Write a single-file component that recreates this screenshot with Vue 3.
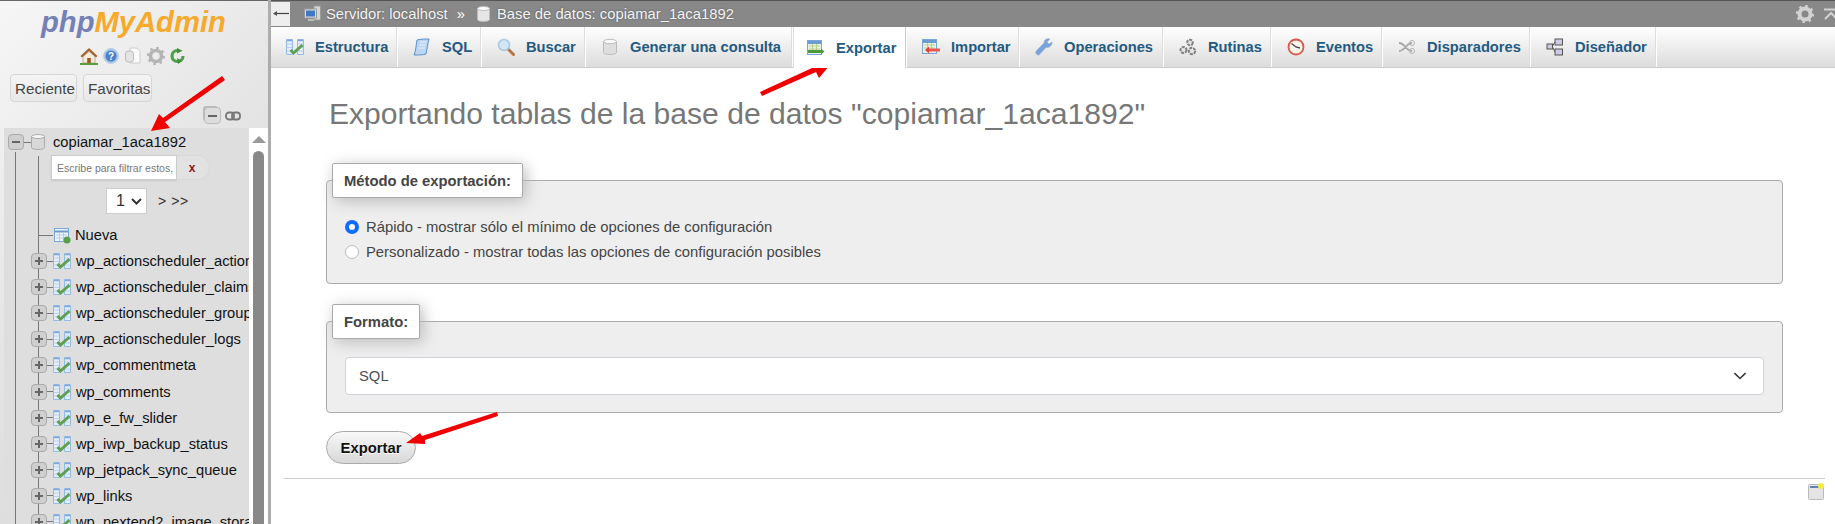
<script setup>
const tabs = [
  { label: 'Estructura', w: 127, icon: 'table' },
  { label: 'SQL', w: 84, icon: 'sql' },
  { label: 'Buscar', w: 104, icon: 'search' },
  { label: 'Generar una consulta', w: 207, icon: 'db' },
  { label: 'Exportar', w: 114, icon: 'export', active: true },
  { label: 'Importar', w: 113, icon: 'import' },
  { label: 'Operaciones', w: 144, icon: 'wrench' },
  { label: 'Rutinas', w: 108, icon: 'gears' },
  { label: 'Eventos', w: 111, icon: 'clock' },
  { label: 'Disparadores', w: 148, icon: 'trigger' },
  { label: 'Diseñador', w: 126, icon: 'designer' }
]
const tables = [
  'wp_actionscheduler_actions', 'wp_actionscheduler_claims', 'wp_actionscheduler_groups',
  'wp_actionscheduler_logs', 'wp_commentmeta', 'wp_comments', 'wp_e_fw_slider',
  'wp_iwp_backup_status', 'wp_jetpack_sync_queue', 'wp_links', 'wp_nextend2_image_storage'
]
</script>

<template>
  <div class="page">
    <aside class="side">
      <div class="logo"><span class="php">php</span><span class="my">MyAdmin</span></div>
      <div class="quick">
        <svg width="18" height="18" viewBox="0 0 18 18"><path d="M3 9.500 9 4.500l6 5V16H3z" fill="#f3ead8" stroke="#9a8a70" stroke-width=".6"/><path d="M9 1 .5 9 2 10.500 9 4l7 6.500L17.500 9z" fill="#a5622c"/><rect x="7.200" y="11" width="3.600" height="5" fill="#9a5a28"/><path d="M0 17h18" stroke="#5b9c3c" stroke-width="2"/></svg>
        <svg width="16" height="16" viewBox="0 0 16 16"><circle cx="8" cy="8" r="7.500" fill="#a9c6ea" stroke="#b9cfe8"/><circle cx="8" cy="8" r="5.500" fill="#4a80c8"/><text x="8" y="11.500" text-anchor="middle" font-size="10" font-weight="700" font-family="Liberation Sans" fill="#fff">?</text></svg>
        <svg width="18" height="18" viewBox="0 0 18 18"><path d="M6 1h7l3 3v12H6z" fill="#fafafa" stroke="#ccc"/><rect x="1.500" y="4" width="8" height="11" rx="3" fill="#e4e4e4" stroke="#bbb"/></svg>
        <svg width="18" height="18" viewBox="0 0 18 18"><circle cx="9" cy="9" r="5.500" fill="none" stroke="#b4b4b4" stroke-width="3.600"/><circle cx="9" cy="9" r="8" fill="none" stroke="#b4b4b4" stroke-width="2.400" stroke-dasharray="2.500 3.780"/></svg>
        <svg width="15" height="16" viewBox="0 0 15 16"><path d="M7.500 2.500a5.500 5.500 0 1 0 5.500 5.500" fill="none" stroke="#4fa04a" stroke-width="3.200"/><path d="M7 0v5.500l5.500-2.700zM7 10l5 3-4 3z" fill="#3f8f3c"/></svg>
      </div>
      <div class="nav-btns">
        <span class="nbtn">Reciente</span>
        <span class="nbtn">Favoritas</span>
      </div>
      <div class="tools">
        <span class="collapse"><i></i></span>
        <svg width="16" height="10" viewBox="0 0 16 10"><rect x="1" y="1.500" width="8" height="7" rx="3" fill="none" stroke="#777" stroke-width="1.800"/><rect x="7" y="1.500" width="8" height="7" rx="3" fill="none" stroke="#777" stroke-width="1.800"/></svg>
      </div>
      <div class="panel">
        <div class="tree">
          <span class="line l1"></span>
          <span class="line l2"></span>
          <div class="row db">
            <span class="exp minus"></span>
            <span class="stub"></span>
            <svg class="dbicon" width="14" height="16" viewBox="0 0 14 16"><path d="M.5 2.500v11c0 2.600 13 2.600 13 0v-11z" fill="#d8d8d8" stroke="#aaa"/><ellipse cx="7" cy="2.500" rx="6.500" ry="2" fill="#f6f6f6" stroke="#aaa"/></svg>
            <span class="dbname">copiamar_1aca1892</span>
          </div>
          <div class="filter">
            <span class="finput">Escribe para filtrar estos,</span>
            <span class="fclear">x</span>
          </div>
          <div class="pager">
            <span class="pagesel">1<svg width="11" height="7" viewBox="0 0 11 7"><path d="M1 1l4.500 4.500L10 1" fill="none" stroke="#333" stroke-width="2"/></svg></span>
            <span class="pagelinks">&gt; &gt;&gt;</span>
          </div>
          <div class="row nueva">
            <span class="hstub"></span>
            <svg width="17" height="17" viewBox="0 0 17 17"><rect x=".5" y="1.500" width="14" height="13" fill="#eef4fb" stroke="#7aa5d8"/><path d="M1 4.500h13" stroke="#6c9bd2" stroke-width="2"/><path d="M2 8h11M2 11h11M5.500 6v8M9.500 6v8" stroke="#b7cde8"/><circle cx="13" cy="13" r="3.500" fill="#56a04a"/></svg>
            <span class="tname">Nueva</span>
          </div>
          <div v-for="t in tables" :key="t" class="row tbl">
            <span class="exp plus"></span>
            <span class="tstub"></span>
            <svg width="18" height="16" viewBox="0 0 18 16"><path d="M.5 .5h6v15h-6zM11.500 .5h6v15h-6z" fill="#e4eefa" stroke="#94bae6"/><path d="M1 1.500h5M12 1.500h5" stroke="#7fa9dc" stroke-width="1.500"/><path d="M1 5h5M1 8.500h5M1 12h5M12 5h5M12 8.500h5M12 12h5" stroke="#b8d1ee"/><path d="M4.500 11l3 3 9-8" fill="none" stroke="#5f9f52" stroke-width="3"/></svg>
            <span class="tname">{{ t }}</span>
          </div>
        </div>
        <div class="scroll">
          <span class="up"></span>
          <span class="thumb"></span>
        </div>
      </div>
    </aside>

    <span class="side-edge"></span>

    <main class="main">
      <header class="crumb">
        <span class="back"><svg width="16" height="7" viewBox="0 0 16 7"><path d="M1 3.500h15" stroke="#444" stroke-width="1.200"/><path d="M0 3.500 4 1v5z" fill="#555"/></svg></span>
        <svg class="srv" width="17" height="18" viewBox="0 0 17 18"><rect x="10" y="1" width="6.500" height="14" fill="#d5d5d5" stroke="#999"/><rect x=".5" y="4" width="12" height="9" fill="#dcdcdc" stroke="#999"/><rect x="2" y="5.500" width="9" height="6" fill="#3f78c4"/><path d="M4 15h6" stroke="#bbb" stroke-width="2"/></svg>
        <span class="ctext">Servidor: localhost</span>
        <span class="csep">»</span>
        <svg class="cdb" width="13" height="16" viewBox="0 0 13 16"><path d="M.5 2.500v11c0 2.600 12 2.600 12 0v-11z" fill="#e6e6e6" stroke="#bbb"/><ellipse cx="6.500" cy="2.500" rx="6" ry="2" fill="#fafafa" stroke="#bbb"/></svg>
        <span class="ctext">Base de datos: copiamar_1aca1892</span>
        <span class="spacer"></span>
        <svg class="cgear" width="18" height="18" viewBox="0 0 18 18"><circle cx="9" cy="9" r="5.500" fill="none" stroke="#d2d2d2" stroke-width="4"/><circle cx="9" cy="9" r="8" fill="none" stroke="#d2d2d2" stroke-width="2.400" stroke-dasharray="2.500 3.780"/></svg>
        <svg class="ccol" width="14" height="12" viewBox="0 0 14 12"><path d="M0 1.500h14M1 11l6-6 6 6" fill="none" stroke="#d2d2d2" stroke-width="2"/></svg>
      </header>

      <nav class="tabs">
        <a v-for="t in tabs" :key="t.label" class="tab" :class="{ active: t.active }" :style="{ width: t.w + 'px' }">
          <svg class="ticon" width="18" height="18" viewBox="0 0 18 18">
            <template v-if="t.icon === 'table'"><path d="M.5 1.500h6v15h-6zM11.500 1.500h6v15h-6z" fill="#e4eefa" stroke="#94bae6"/><path d="M1 2.500h5M12 2.500h5" stroke="#7fa9dc" stroke-width="1.500"/><path d="M1 6h5M1 9.500h5M1 13h5M12 6h5M12 9.500h5M12 13h5" stroke="#b8d1ee"/><path d="M4.500 12l3 3 9-8" fill="none" stroke="#5f9f52" stroke-width="3"/></template>
            <template v-else-if="t.icon === 'sql'"><path d="M4 2c3-1 9-1 12-1-1 4-2 10-3 15-3 1-8 1-12 1 2-4 2-10 3-15z" fill="#bcd6f2" stroke="#5d8fca"/><path d="M7 4h6M6.500 7h6M6 10h6" stroke="#e8f1fb"/></template>
            <template v-else-if="t.icon === 'search'"><path d="M11 11l5.500 5.500" stroke="#b5773c" stroke-width="3" stroke-linecap="round"/><circle cx="7" cy="7" r="5.500" fill="#d3e6f7" stroke="#a8c6e0" stroke-width="1.500"/></template>
            <template v-else-if="t.icon === 'db'"><path d="M2.500 3.500v11c0 2.600 13 2.600 13 0v-11z" fill="#dedede" stroke="#bbb"/><ellipse cx="9" cy="3.500" rx="6.500" ry="2.200" fill="#fafafa" stroke="#bbb"/></template>
            <template v-else-if="t.icon === 'export'"><rect x=".5" y="1.500" width="14" height="14" fill="#eaf2e4" stroke="#7aa5d8"/><path d="M1 3.500h13" stroke="#6c9bd2" stroke-width="3"/><path d="M2 7h11M2 10h11M5.500 5v6M9.500 5v6" stroke="#b8d08e"/><path d="M1 12.500h13" stroke="#4a9a3c" stroke-width="3"/><path d="M14 9.500l3.500 3-3.500 3z" fill="#4a9a3c"/></template>
            <template v-else-if="t.icon === 'import'"><rect x=".5" y="1.500" width="14" height="14" fill="#eaf2e4" stroke="#7aa5d8"/><path d="M1 3.500h13" stroke="#6c9bd2" stroke-width="3"/><path d="M2 7h11M2 10h11M5.500 5v6M9.500 5v6" stroke="#b8d08e"/><path d="M6 12h12" stroke="#ee5555" stroke-width="3"/><path d="M7 8.500l-4 3.500 4 3.500z" fill="#e63c3c"/></template>
            <template v-else-if="t.icon === 'wrench'"><path d="M2 16.500c-2-1-1.500-3 0-4.500L9 5c0-3 2-5 6-4l-3 3 2 2 3-2c.5 3-2 6-6 5.500L4.500 16.500c-1 1-1.500.8-2.500 0z" fill="#7aa2dc" stroke="#9fb0c8" stroke-width=".6"/></template>
            <template v-else-if="t.icon === 'gears'"><g fill="#e4e4e4" stroke="#808080" stroke-width="2"><circle cx="11" cy="4.500" r="2.800" stroke-dasharray="3 1"/><circle cx="4.500" cy="12" r="3" stroke-dasharray="3 1"/><circle cx="13" cy="13" r="3.200" stroke-dasharray="3 1"/></g></template>
            <template v-else-if="t.icon === 'clock'"><circle cx="9" cy="9" r="7.500" fill="#fbf5ea" stroke="#d9564a" stroke-width="1.800"/><path d="M4.500 5.500 9 9l4 1" fill="none" stroke="#444" stroke-width="1.300"/></template>
            <template v-else-if="t.icon === 'trigger'"><path d="M1 5c6 0 7 8 13 8M1 13c6 0 7-8 13-8" fill="none" stroke="#a8a8a8" stroke-width="1.800"/><circle cx="14" cy="5" r="2.500" fill="none" stroke="#b5b5b5"/><circle cx="14" cy="13" r="2.500" fill="none" stroke="#b5b5b5"/></template>
            <template v-else-if="t.icon === 'designer'"><rect x="9" y="1" width="7.500" height="6" fill="#cfc9e6" stroke="#555"/><rect x="9" y="11" width="7.500" height="6" fill="#cfc9e6" stroke="#555"/><rect x="1" y="6" width="5.500" height="5" fill="#cfc9e6" stroke="#555"/><path d="M6.500 8 9 4M6.500 9 9 14" stroke="#555"/></template>
          </svg>
          <span>{{ t.label }}</span>
        </a>
        <span class="tab-fill"></span>
      </nav>

      <section class="content">
        <h2>Exportando tablas de la base de datos "copiamar_1aca1892"</h2>
        <div class="fs first">
          <div class="legend">Método de exportación:</div>
          <label class="opt"><span class="radio on"></span>Rápido - mostrar sólo el mínimo de opciones de configuración</label>
          <label class="opt"><span class="radio"></span>Personalizado - mostrar todas las opciones de configuración posibles</label>
        </div>
        <div class="fs second">
          <div class="legend">Formato:</div>
          <div class="select">SQL<svg width="14" height="8" viewBox="0 0 14 8"><path d="M1.500 1.200 7 6.500l5.500-5.300" fill="none" stroke="#343a40" stroke-width="1.600"/></svg></div>
        </div>
        <button class="go">Exportar</button>
      </section>
      <div class="rule"></div>
      <div class="foot">
        <svg width="16" height="17" viewBox="0 0 16 17"><rect x=".5" y="1.500" width="15" height="15" rx="1" fill="#e4e4e4" stroke="#bbb"/><path d="M2 4h10" stroke="#3a63a8" stroke-width="1.500"/><circle cx="13" cy="3" r="3" fill="#f4ec3a"/></svg>
      </div>
    </main>

    <svg class="arrows" width="1835" height="524" viewBox="0 0 1835 524">
      <g fill="#f00000" stroke="none">
        <path d="M222 76 L225 80 L165 122 L170 128 L151 131 L159 114 L163 118 Z"/>
        <path d="M760 92 L762 96 L816 72 L819 78 L830 65 L808 64 L812 68 Z"/>
        <path d="M497 412 L498 416 L425 440 L425 444 L406 443 L420 433 L422 436 Z"/>
      </g>
    </svg>
  </div>
</template>

<style>
html, body { margin: 0; background: #fff; overflow: hidden; }
</style>

<style scoped>
* { box-sizing: border-box; }
.page { position: relative; width: 1835px; height: 524px; overflow: hidden; display: flex; font-family: "Liberation Sans", Arial, sans-serif; background: #fff; }
.side { width: 268px; height: 524px; flex: none; background: linear-gradient(135deg, #f6f6f6 0%, #dfdfdf 60%, #d8d8d8 100%); border-top: 1px solid #666; overflow: hidden; }
.side-edge { width: 3px; flex: none; background: #adadad; }
.logo { height: 39px; padding: 3px 0 0 41px; font-size: 29.200px; line-height: 36px; font-weight: 700; font-style: italic; }
.php { color: #7580b8; }
.my { color: #f7a92a; }
.quick { height: 20px; padding-left: 80px; margin-top: 6px; display: flex; align-items: center; gap: 5px; }
.nav-btns { display: flex; gap: 6px; padding: 0 0 0 10px; margin-top: 8px; }
.nbtn { height: 28px; padding: 0 4px; display: flex; align-items: center; font-size: 15.200px; color: #444; background: linear-gradient(#f4f4f4, #e8e8e8); border: 1px solid #d6d6d6; border-radius: 4px; }
.nbtn:first-child { width: 67px; }
.nbtn:last-child { width: 69px; }
.tools { height: 26px; display: flex; align-items: center; padding: 1px 0 0 204px; gap: 4px; }
.collapse { position: relative; width: 17px; height: 17px; border: 1px solid #bbb; border-radius: 4px; background: #ddd; box-shadow: -2px -2px 0 -1px #bbb; display: flex; align-items: center; justify-content: center; }
.collapse i { width: 9px; height: 2px; background: #666; }
.panel { margin-left: 4px; height: 400px; display: flex; background: #dedede; }
.tree { position: relative; width: 245px; flex: none; overflow: hidden; padding-top: 5px; }
.line { position: absolute; width: 1px; background: #777; }
.l1 { left: 11px; top: 24px; bottom: 0; }
.l2 { left: 34px; top: 28px; bottom: 0; }
.row { position: relative; display: flex; align-items: center; white-space: nowrap; color: #111; font-size: 14.700px; }
.row > * { flex: none; }
.db { height: 18px; padding-left: 4px; margin-bottom: 4px; }
.exp { width: 16px; height: 16px; border: 1px solid #aaa; border-radius: 4px; background: #cfcfcf; position: relative; z-index: 1; }
.exp::before { content: ""; position: absolute; left: 3px; right: 3px; top: 6px; height: 2px; background: #666; }
.plus::after { content: ""; position: absolute; top: 3px; bottom: 3px; left: 6px; width: 2px; background: #666; }
.stub { width: 7px; height: 1px; background: #777; }
.dbicon { margin-right: 8px; }
.dbname { color: #111; }
.filter { display: flex; margin: 0 0 0 47px; height: 25px; width: 159px; }
.finput { width: 126px; height: 25px; padding-left: 5px; display: flex; align-items: center; background: #fff; border: 1px solid #ccc; font-size: 10.500px; color: #777; white-space: nowrap; overflow: hidden; box-shadow: 0 1px 2px rgba(0,0,0,.1); }
.fclear { flex: 1; display: flex; align-items: center; justify-content: center; background: #e2e2e2; border: 1px solid #d8d8d8; border-left: 0; border-radius: 0 13px 13px 0; color: #8a1a1a; font-size: 12px; font-weight: 700; padding-right: 2px; }
.pager { height: 26px; margin-top: 8px; padding-left: 102px; display: flex; align-items: center; gap: 11px; color: #222; }
.pagesel { width: 41px; height: 26px; background: #fff; border: 1px solid #ccc; padding: 0 4px 0 9px; display: flex; align-items: center; justify-content: space-between; font-size: 16px; color: #333; }
.pagelinks { font-size: 14px; color: #333; letter-spacing: .6px; }
.nueva { height: 26px; margin-top: 8px; padding-left: 50px; gap: 4px; }
.hstub { position: absolute; left: 34px; top: 13px; width: 15px; height: 1px; background: #777; }
.tbl { height: 26.100px; padding-left: 27px; }
.tstub { width: 6px; height: 1px; background: #777; }
.tbl svg { margin-right: 5px; }
.tname { color: #111; }
.scroll { position: relative; flex: 1; background: #fff; width: 19px; }
.up { position: absolute; left: 3px; top: 8px; width: 0; height: 0; border-left: 7px solid transparent; border-right: 7px solid transparent; border-bottom: 7px solid #999; }
.thumb { position: absolute; left: 4px; top: 23px; bottom: -30px; width: 11px; background: #888; border-radius: 6px; }
.main { flex: 1; min-width: 0; display: flex; flex-direction: column; }
.crumb { height: 27px; flex: none; background: #888; border-top: 1px solid #555; display: flex; align-items: center; color: #fff; font-size: 14.800px; white-space: nowrap; }
.back { width: 19px; height: 24px; margin-bottom: 1px; background: #eee; display: flex; align-items: center; justify-content: center; }
.srv { margin-left: 14px; margin-right: 5px; }
.csep { margin: 0 12px 0 9px; }
.cdb { margin-right: 7px; }
.ctext { text-shadow: 0 0 2px rgba(0,0,0,.4); color: #f4f4f4; }
.spacer { flex: 1; }
.cgear { margin-right: 10px; }
.ccol { margin-right: -3px; }
.tabs { height: 41px; flex: none; display: flex; border-bottom: 1px solid #ccc; }
.tab { height: 40px; flex: none; display: flex; align-items: center; gap: 11px; padding-left: 15px; color: #235a81; font-weight: 700; font-size: 14.700px; background: linear-gradient(#fff, #dcdcdc); border-right: 1px solid #fff; box-shadow: inset -1px 0 0 #ddd; white-space: nowrap; }
.tab.active { background: #fff; height: 41px; padding-left: 13px; border-left: 1px solid #ddd; box-shadow: inset -1px 0 0 #ccc; position: relative; z-index: 1; }
.ticon { flex: none; }
.tab-fill { flex: 1; background: linear-gradient(#fff, #dcdcdc); }
.content { padding: 0 52px 0 55px; flex: none; height: 410px; }
h2 { margin: 0; height: 94px; padding: 27px 0 0 3px; font-size: 30.100px; line-height: 38px; font-weight: 400; color: #777; white-space: nowrap; }
.fs { position: relative; background: #eee; border: 1px solid #aaa; border-radius: 4px; }
.first { height: 104px; padding-top: 33px; margin-top: 18px; }
.second { height: 92px; margin-top: 37px; padding: 35px 18px 0; }
.legend { position: absolute; left: 5px; top: -18px; height: 35px; padding: 0 11px; display: flex; align-items: center; background: #fff; border: 1px solid #aaa; border-radius: 2px; box-shadow: 3px 3px 15px #bbb; font-size: 14.800px; font-weight: 700; color: #444; white-space: nowrap; }
.opt { height: 25px; padding-left: 18px; display: flex; align-items: center; gap: 7px; font-size: 14.800px; color: #444; }
.radio { width: 14px; height: 14px; border-radius: 50%; background: #fff; border: 1px solid #bbb; }
.radio.on { background: #fff; border: 4px solid #0d6efd; }
.select { height: 38px; padding: 0 16px 0 13px; display: flex; align-items: center; justify-content: space-between; background: #fff; border: 1px solid #ced4da; border-radius: 4px; font-size: 14.800px; color: #495057; }
.go { display: block; margin-top: 18px; width: 90px; height: 33px; padding: 0; font-family: inherit; font-size: 14.800px; font-weight: 700; color: #111; background: linear-gradient(#f8f8f8, #d8d8d8); border: 1px solid #aaa; border-radius: 17px; text-shadow: 0 1px 0 #fff; }
.rule { height: 1px; flex: none; margin: 0 10px 0 13px; background: #ccc; }
.foot { padding: 4px 11px 0 0; display: flex; justify-content: flex-end; }
.arrows { position: absolute; left: 0; top: 0; pointer-events: none; }
</style>
